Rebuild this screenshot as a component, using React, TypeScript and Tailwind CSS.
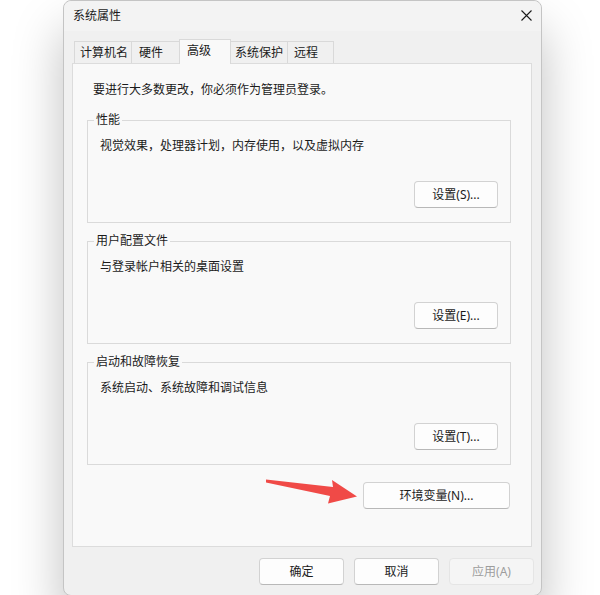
import React from "react"

const font = { fontFamily: '"Noto Sans", "Noto Sans CJK SC", sans-serif' }

const TABS = [
  { label: "计算机名", w: "w-[58px] pl-[5px]" },
  { label: "硬件", w: "w-[49px] pl-[7px] -ml-px" },
  { label: "高级", w: "w-[52px] pl-[7px] -ml-px", active: true },
  { label: "系统保护", w: "w-[58px] pl-[4px] -ml-px" },
  { label: "远程", w: "w-[47px] pl-[6px] -ml-px" },
]

const GROUPS = [
  { title: "性能", text: "视觉效果，处理器计划，内存使用，以及虚拟内存", btn: "设置(S)..." },
  { title: "用户配置文件", text: "与登录帐户相关的桌面设置", btn: "设置(E)..." },
  { title: "启动和故障恢复", text: "系统启动、系统故障和调试信息", btn: "设置(T)..." },
]

function Button({ children, className = "", disabled = false }: { children: React.ReactNode; className?: string; disabled?: boolean }) {
  return (
    <button
      className={`h-[27px] rounded-[4px] border text-[12px] leading-[16px] flex items-center justify-center ${
        disabled
          ? "bg-[#f5f5f5] border-[#e5e5e5] text-[#9d9d9d]"
          : "bg-[#fdfdfd] border-[#d2d2d2] border-b-[#b8b8b8] text-[#1b1b1b]"
      } ${className}`}
    >
      {children}
    </button>
  )
}

export default function App() {
  return (
    <div className="relative w-[600px] h-[595px] bg-white overflow-hidden" style={font}>
      {/* dialog */}
      <div className="ml-[63px] w-[479px] h-[596px] bg-[#f0f0f0] border border-[#c4c4c4] rounded-[8px] shadow-[0_30px_50px_rgba(0,0,0,0.25)] flex flex-col text-[#1b1b1b]">
        <div className="h-[30px] flex items-center justify-between pl-[9px] pr-[9px] bg-[#f3f3f3] rounded-t-[8px]">
          <span className="text-[12px] leading-[16px]">系统属性</span>
          <svg width="11" height="11" viewBox="0 0 11 11" className="mb-[1px]">
            <path d="M0.5 0.5 L10.5 10.5 M10.5 0.5 L0.5 10.5" stroke="#1b1b1b" strokeWidth="1.1" />
          </svg>
        </div>

        {/* tabs */}
        <div className="mt-[8px] ml-[10px] h-[24px] flex items-end relative z-10">
          {TABS.map((t) =>
            t.active ? (
              <div
                key={t.label}
                className={`${t.w} h-[25px] -mb-px bg-[#f9f9f9] border border-b-0 border-[#d9d9d9] text-[12px] leading-[16px] pt-[3px]`}
              >
                {t.label}
              </div>
            ) : (
              <div
                key={t.label}
                className={`${t.w} h-[22px] bg-[#f0f0f0] border border-b-0 border-[#d9d9d9] text-[12px] leading-[16px] pt-[3px]`}
              >
                {t.label}
              </div>
            )
          )}
        </div>

        {/* panel */}
        <div className="ml-[8px] w-[460px] h-[484px] bg-[#f9f9f9] border border-[#dcdcdc] flex flex-col pl-[14px] pr-[20px] pt-[18px]">
          <p className="ml-[6px] text-[12px] leading-[16px]">要进行大多数更改，你必须作为管理员登录。</p>
          <div className="mt-[14px] flex flex-col gap-[10px]">
            {GROUPS.map((g) => (
              <fieldset key={g.title} className="h-[111px] border border-[#dadada] p-0 m-0 min-w-0">
                <legend className="ml-[6px] px-[2px] text-[12px] leading-[16px]">{g.title}</legend>
                <div className="flex flex-col px-[12px]">
                  <p className="mt-[10px] text-[12px] leading-[16px]">{g.text}</p>
                  <Button className="self-end mt-[27px] w-[84px]">{g.btn}</Button>
                </div>
              </fieldset>
            ))}
          </div>
          <Button className="self-end mt-[17px] mr-[1px] w-[147px] border-[#0067c0] border-b-[#0067c0]">环境变量(N)...</Button>
        </div>

        {/* bottom buttons */}
        <div className="flex justify-end gap-[10px] pr-[7px] pt-[11px]">
          <Button className="w-[85px]">确定</Button>
          <Button className="w-[85px]">取消</Button>
          <Button className="w-[85px]" disabled>
            应用(A)
          </Button>
        </div>
      </div>

      {/* annotation arrow */}
      <svg className="absolute left-0 top-0 pointer-events-none" width="600" height="595">
        <polygon
          points="266,479.5 333,487 332,480 357,496.5 328,503.5 330,496 266,482.5"
          fill="#f04a47"
        />
      </svg>
    </div>
  )
}
